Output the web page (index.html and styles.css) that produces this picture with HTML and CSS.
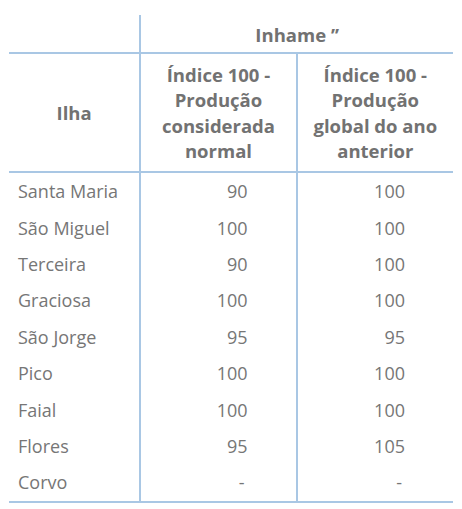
FILE: index.html
```html
<!DOCTYPE html>
<html lang="pt">
<head>
<meta charset="utf-8">
<link rel="stylesheet" href="styles.css">
</head>
<body>
<table class="tbl">
  <colgroup>
    <col class="c-ilha">
    <col class="c-num">
    <col class="c-num">
  </colgroup>
  <thead>
    <tr class="r-top">
      <th class="blank"></th>
      <th colspan="2" class="grp">Inhame ’’</th>
    </tr>
    <tr class="r-head">
      <th>Ilha</th>
      <th>Índice 100 - Produção considerada normal</th>
      <th>Índice 100 - Produção global do ano anterior</th>
    </tr>
  </thead>
  <tbody>
    <tr><td>Santa Maria</td><td class="n">90</td><td class="n">100</td></tr>
    <tr><td>São Miguel</td><td class="n">100</td><td class="n">100</td></tr>
    <tr><td>Terceira</td><td class="n">90</td><td class="n">100</td></tr>
    <tr><td>Graciosa</td><td class="n">100</td><td class="n">100</td></tr>
    <tr><td>São Jorge</td><td class="n">95</td><td class="n">95</td></tr>
    <tr><td>Pico</td><td class="n">100</td><td class="n">100</td></tr>
    <tr><td>Faial</td><td class="n">100</td><td class="n">100</td></tr>
    <tr><td>Flores</td><td class="n">95</td><td class="n">105</td></tr>
    <tr><td>Corvo</td><td class="n dash">-</td><td class="n dash">-</td></tr>
  </tbody>
</table>
</body>
</html>
```
FILE: styles.css
```css
html, body {
  margin: 0;
  background: #ffffff;
}
body {
  padding: 15px 0 0 9px;
  font-family: "Open Sans", "Noto Sans", sans-serif;
  color: #767676;
}
.tbl {
  border-collapse: collapse;
  table-layout: fixed;
  width: 444px;
  font-size: 18px;
}
.c-ilha { width: 131px; }
.c-num { width: 156px; }
.tbl th, .tbl td {
  padding: 0;
  border-left: 2px solid #a9c7e4;
}
.tbl tr > :first-child {
  border-left: none;
}
.tbl th {
  font-weight: 700;
  font-size: 18.5px;
  color: #727272;
  line-height: 25.5px;
  text-align: center;
  vertical-align: middle;
}
.r-top th {
  height: 35px;
  border-bottom: 2px solid #a9c7e4;
  padding-top: 2px;
}
.r-head th {
  height: 117px;
  border-bottom: 2px solid #a9c7e4;
  padding: 0 12px;
}
.tbl td {
  height: 36.4px;
  line-height: 22px;
  vertical-align: middle;
  padding-left: 9px;
}
.tbl td.n {
  text-align: right;
  padding: 0 48px 0 0;
}
.tbl td.dash {
  padding-right: 51px;
}
.tbl tbody tr:last-child td {
  border-bottom: 2px solid #a9c7e4;
}
```
